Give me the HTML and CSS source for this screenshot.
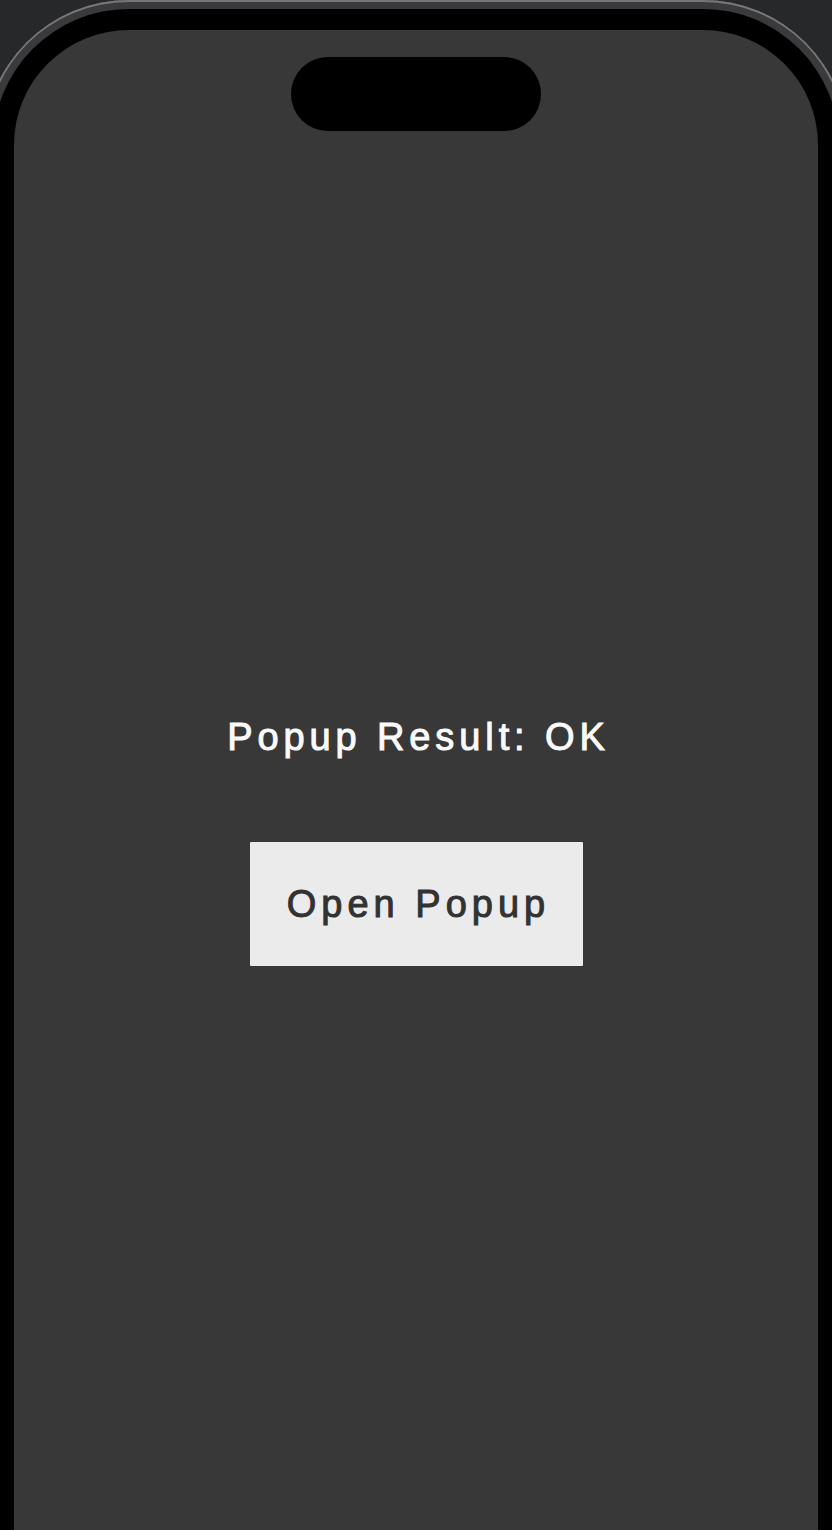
FILE: index.html
```html
<!DOCTYPE html>
<html lang="en">
<head>
<meta charset="utf-8">
<title>Popup Demo</title>
<link rel="stylesheet" href="styles.css">
</head>
<body>
  <div class="device">
    <div class="bezel">
      <main class="screen">
        <div class="island"></div>
        <p class="result"><span class="spaced">Popup Result: OK</span></p>
        <button class="open-btn" type="button"><span class="spaced">Open Popup</span></button>
      </main>
    </div>
  </div>
</body>
</html>
```

FILE: styles.css
```css
html, body {
  margin: 0;
  padding: 0;
}

body {
  width: 832px;
  height: 1530px;
  overflow: hidden;
  background: #27282a;
  font-family: "Liberation Sans", Arial, sans-serif;
}

.device {
  width: 864px;
  margin-left: -16px;
  padding: 9px 9px 0;
  box-sizing: border-box;
  border-radius: 145px 145px 0 0;
  background: #3a3a3c;
  box-shadow: inset 0 2px 0 0 #767678, inset 2px 0 0 0 #767678, inset -2px 0 0 0 #767678;
}

.bezel {
  padding: 21px 21px 0;
  border-radius: 136px 136px 0 0;
  background: #000;
}

.screen {
  height: 1500px;
  display: flex;
  flex-direction: column;
  align-items: center;
  border-radius: 115px 115px 0 0;
  background: #383838;
}

.island {
  width: 250px;
  height: 74px;
  margin-top: 27px;
  border-radius: 37px;
  background: #000;
}

.result {
  margin: 584px 0 0;
  font-size: 38px;
  line-height: 44px;
  white-space: nowrap;
  color: #fafafa;
  letter-spacing: 4.9px;
  -webkit-text-stroke: 1px #fafafa;
}

.result .spaced {
  margin-right: -4.9px;
}

.open-btn {
  width: 333px;
  height: 124px;
  margin-top: 83px;
  padding: 0;
  border: none;
  border-radius: 1px;
  background: #ebebeb;
  color: #323232;
  font-family: "Liberation Sans", Arial, sans-serif;
  font-size: 38px;
  line-height: 44px;
  white-space: nowrap;
  letter-spacing: 5px;
  -webkit-text-stroke: 1px #323232;
  display: flex;
  align-items: center;
  justify-content: center;
}

.open-btn .spaced {
  margin-right: -5px;
}
```
